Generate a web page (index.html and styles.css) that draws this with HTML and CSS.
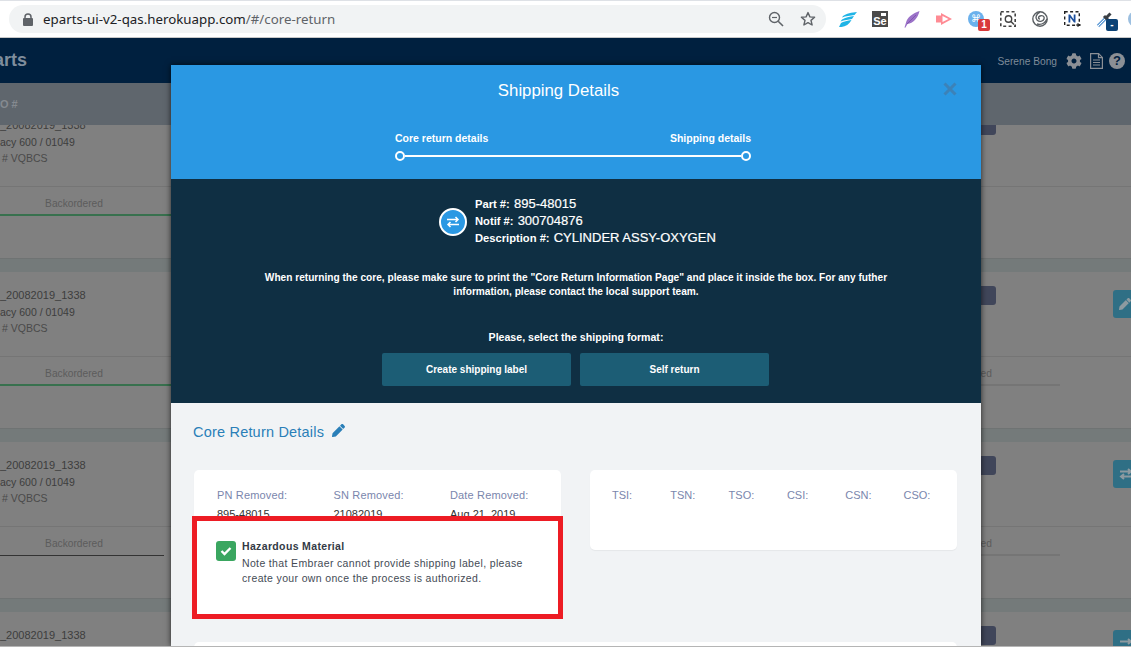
FILE: index.html
```html
<!DOCTYPE html>
<html lang="en">
<head>
<meta charset="utf-8">
<title>eParts - core return</title>
<link rel="stylesheet" href="styles.css">
</head>
<body>
<div class="window">
  <div class="toolbar">
    <div class="omnibox">
      <svg class="lock" width="10" height="13" viewBox="0 0 10 13"><path d="M2 6V4a3 3 0 0 1 6 0v2" fill="none" stroke="#5f6368" stroke-width="1.5"/><rect y="5" width="10" height="8" rx="1" fill="#5f6368"/></svg>
      <span class="url">eparts-ui-v2-qas.herokuapp.com<span class="url-path">/#/core-return</span></span>
      <svg class="omni-icon" width="16" height="16" viewBox="0 0 16 16"><circle cx="6.500" cy="6.500" r="5" fill="none" stroke="#5f6368" stroke-width="1.400"/><path d="M10.200 10.200L15 15" stroke="#5f6368" stroke-width="1.600"/><path d="M4 6.500h5" stroke="#5f6368" stroke-width="1.200"/></svg>
      <svg class="omni-icon" width="16" height="16" viewBox="0 0 16 16"><path d="M8 1.600l1.900 4.300 4.700.4-3.600 3.100 1.100 4.600L8 11.600l-4.100 2.400L5 9.400 1.400 6.300l4.700-.4z" fill="none" stroke="#5f6368" stroke-width="1.400" stroke-linejoin="round"/></svg>
    </div>
    <div class="extensions">
      <div class="ext"><svg width="18" height="15" viewBox="0 0 18 15"><path d="M18 0C13 .5 7 1.500 4 4L3 5.500C7 4 11 3.500 15.500 3zM15 4C11 4.500 6 5.500 3 7.500L1.500 9.500C5.500 8 9.500 7.500 13 7zM12.500 8C9 8.500 4 9.500 2 11L0 15c5 .5 10-2 12.500-7z" fill="#1fb4e6"/></svg></div>
      <div class="ext"><span class="ext-se"><span class="ext-cam"></span>Se</span></div>
      <div class="ext"><svg width="16" height="17" viewBox="0 0 16 17"><path d="M15.500 0C11 1.500 4.500 5 2.500 10L.5 16.500l.8.3L3.500 13C9 12.500 14 7 15.500 0z" fill="#9b72c8"/><path d="M12 4L3 13" stroke="#7a4fa8" stroke-width=".8"/></svg></div>
      <div class="ext"><svg width="16" height="12" viewBox="0 0 16 12"><path d="M0 2.500h5V0l11 6-11 6V9.500H0z" fill="#ff8b94"/><path d="M6.500 3l6 3-6 3z" fill="#fff"/></svg></div>
      <div class="ext ext-badged">
        <span class="ext-cmd">⌘</span>
        <span class="badge badge-red">1</span>
      </div>
      <div class="ext"><svg width="16" height="16" viewBox="0 0 16 16"><rect x=".8" y=".8" width="14.400" height="14.400" fill="none" stroke="#444" stroke-width="1.600" stroke-dasharray="3 2.400"/><circle cx="8.500" cy="8" r="3.200" fill="none" stroke="#444" stroke-width="1.400"/><path d="M11 10.500l3 3" stroke="#444" stroke-width="1.500"/></svg></div>
      <div class="ext"><svg width="16" height="16" viewBox="0 0 16 16" fill="none" stroke="#5a5f63" stroke-width="1.400"><circle cx="8" cy="8" r="7.200"/><path d="M8 1C4 3 3 7 5 9s6 2 7-1-2-4-4-3-2 3 0 3"/><path d="M15 8c-2 4-6 6-10 5"/></svg></div>
      <div class="ext"><svg width="17" height="16" viewBox="0 0 17 16"><rect x=".7" y=".7" width="14.600" height="13.600" fill="none" stroke="#222" stroke-width="1.400" stroke-dasharray="3 2.400"/><path d="M4.500 11.500v-8h1.600l3.600 5v-5h1.800v8H10L6.300 6.400v5.100z" fill="#1c4f9c"/><path d="M14 12v4M12 14h5" stroke="#222"/></svg></div>
      <div class="ext ext-badged">
        <svg width="17" height="17" viewBox="0 0 17 17"><path d="M2 15L10 7" stroke="#6aa2d8" stroke-width="3.400"/><path d="M2 15L10 7" stroke="#fff" stroke-width="1"/><path d="M8 5l4 4M11 6l3.500-3.500" stroke="#3a3f44" stroke-width="3"/></svg>
        <span class="badge badge-blue">-</span>
      </div>
      <div class="ext"><svg width="16" height="16" viewBox="0 0 16 16"><circle cx="8" cy="8" r="8" fill="#9cbfe0"/></svg></div>
    </div>
  </div>

  <div class="app-header">
    <span class="app-name">arts</span>
    <span class="user-name">Serene Bong</span>
    <svg class="head-icon" width="16" height="16" viewBox="0 0 512 512"><path fill="#8b8f95" d="M487.400 315.700l-42.600-24.600c4.300-23.200 4.300-47 0-70.200l42.600-24.600c4.900-2.800 7.100-8.600 5.500-14-11.100-35.600-30-67.800-54.700-94.600-3.800-4.100-10-5.100-14.800-2.300L380.800 110c-17.900-15.400-38.500-27.300-60.800-35.100V25.800c0-5.600-3.900-10.500-9.400-11.700-36.700-8.200-74.300-7.800-109.200 0-5.500 1.200-9.400 6.100-9.400 11.700V75c-22.200 7.900-42.800 19.800-60.800 35.100L88.700 85.500c-4.900-2.800-11-1.900-14.800 2.300-24.700 26.700-43.600 58.900-54.700 94.600-1.700 5.400.6 11.200 5.500 14L67.300 221c-4.300 23.200-4.300 47 0 70.200l-42.600 24.600c-4.900 2.800-7.100 8.600-5.500 14 11.100 35.600 30 67.800 54.700 94.600 3.800 4.100 10 5.100 14.800 2.300l42.600-24.600c17.900 15.400 38.500 27.300 60.800 35.100v49.200c0 5.600 3.900 10.500 9.400 11.700 36.700 8.200 74.300 7.800 109.200 0 5.500-1.200 9.400-6.100 9.400-11.700v-49.200c22.200-7.900 42.800-19.800 60.800-35.100l42.600 24.600c4.900 2.800 11 1.900 14.800-2.300 24.700-26.700 43.600-58.900 54.700-94.600 1.500-5.500-.7-11.300-5.600-14.100zM256 336c-44.100 0-80-35.900-80-80s35.900-80 80-80 80 35.900 80 80-35.900 80-80 80z"/></svg>
    <svg class="head-icon doc-icon" width="13" height="16" viewBox="0 0 13 16" fill="none" stroke="#8b8f95" stroke-width="1.200"><path d="M.6.6h8l3.800 3.800v11H.6z"/><path d="M3 7h7M3 9.500h7M3 12h7M8.500.6v4h4"/></svg>
    <span class="help-icon">?</span>
  </div>

  <div class="table-head">O #</div>

  <div class="rows">
    <div class="row">
      <div class="row-band"></div>
      <div class="row-top">
        <div class="row-text"><div class="row-id">_20082019_1338</div><div>acy 600 / 01049</div><div class="row-ref"># VQBCS</div></div>
        <div class="row-pill"></div>
      </div>
      <div class="row-status"><div class="status-left line-green">Backordered</div></div>
    </div>
    <div class="row">
      <div class="row-band"></div>
      <div class="row-top">
        <div class="row-text"><div class="row-id">_20082019_1338</div><div>acy 600 / 01049</div><div class="row-ref"># VQBCS</div></div>
        <div class="row-pill"></div>
        <div class="row-action"><svg width="12" height="12" viewBox="0 0 512 512"><path fill="#8d9aa0" d="M497.900 142.100l-46.100 46.100c-4.700 4.700-12.300 4.700-17 0l-111-111c-4.700-4.700-4.700-12.300 0-17l46.100-46.100c18.700-18.700 49.100-18.700 67.900 0l60.100 60.100c18.800 18.700 18.800 49.100 0 67.900zM284.200 99.800L21.600 362.400.4 483.900c-2.900 16.400 11.400 30.600 27.800 27.800l121.500-21.300 262.600-262.600c4.700-4.700 4.700-12.300 0-17l-111-111c-4.800-4.700-12.400-4.700-17.100 0z"/></svg></div>
      </div>
      <div class="row-status"><div class="status-left line-green">Backordered</div><div class="status-right">Backordered</div></div>
    </div>
    <div class="row">
      <div class="row-band"></div>
      <div class="row-top">
        <div class="row-text"><div class="row-id">_20082019_1338</div><div>acy 600 / 01049</div><div class="row-ref"># VQBCS</div></div>
        <div class="row-pill"></div>
        <div class="row-action"><svg width="14" height="12" viewBox="0 0 14 12" fill="none" stroke="#8d9aa0" stroke-width="2"><path d="M1 3.500h11M9 1l3 2.500L9 6M13 8.500H2M5 6L2 8.500 5 11"/></svg></div>
      </div>
      <div class="row-status"><div class="status-left line-dark">Backordered</div><div class="status-right">Backordered</div></div>
    </div>
    <div class="row">
      <div class="row-band"></div>
      <div class="row-top">
        <div class="row-text"><div class="row-id">_20082019_1338</div></div>
        <div class="row-pill"></div>
        <div class="row-action"><svg width="14" height="12" viewBox="0 0 14 12" fill="none" stroke="#8d9aa0" stroke-width="2"><path d="M1 3.500h11M9 1l3 2.500L9 6"/></svg></div>
      </div>
    </div>
  </div>

  <div class="modal">
    <div class="modal-head">
      <h2 class="modal-title">Shipping Details</h2>
      <svg class="modal-close" width="14" height="14" viewBox="0 0 14 14"><path d="M1.500 1.500l11 11M12.500 1.500l-11 11" stroke="#3c82b8" stroke-width="3"/></svg>
      <div class="stepper">
        <div class="step-labels"><span>Core return details</span><span>Shipping details</span></div>
        <div class="step-track"><span class="step-dot"></span><span class="step-line"></span><span class="step-dot"></span></div>
      </div>
    </div>

    <div class="modal-info">
      <div class="part">
        <span class="part-icon"><svg width="14" height="12" viewBox="0 0 14 12" fill="none" stroke="#fff" stroke-width="1.500"><path d="M1 3.500h11M9.500 1L12 3.500 9.500 6M13 8.500H2M4.500 6L2 8.500 4.500 11"/></svg></span>
        <div class="part-lines">
          <div class="part-line">Part #: <span class="part-value">895-48015</span></div>
          <div class="part-line">Notif #: <span class="part-value">300704876</span></div>
          <div class="part-line">Description #: <span class="part-value">CYLINDER ASSY-OXYGEN</span></div>
        </div>
      </div>
      <p class="info-note">When returning the core, please make sure to print the "Core Return Information Page" and place it inside the box. For any futher information, please contact the local support team.</p>
      <p class="info-select">Please, select the shipping format:</p>
      <div class="ship-buttons">
        <button class="ship-btn">Create shipping label</button>
        <button class="ship-btn">Self return</button>
      </div>
    </div>

    <div class="modal-body">
      <div class="section-title">Core Return Details
        <svg width="13" height="13" viewBox="0 0 512 512"><path fill="#2a7fb8" d="M497.900 142.100l-46.100 46.100c-4.700 4.700-12.300 4.700-17 0l-111-111c-4.700-4.700-4.700-12.300 0-17l46.100-46.100c18.700-18.700 49.100-18.700 67.900 0l60.100 60.100c18.800 18.700 18.800 49.100 0 67.900zM284.200 99.800L21.600 362.400.4 483.900c-2.900 16.400 11.400 30.600 27.800 27.800l121.500-21.300 262.600-262.600c4.700-4.700 4.700-12.300 0-17l-111-111c-4.800-4.700-12.400-4.700-17.100 0z"/></svg>
      </div>
      <div class="cards">
        <div class="card card-removed">
          <div><div class="field-label">PN Removed:</div><div class="field-value">895-48015</div></div>
          <div><div class="field-label">SN Removed:</div><div class="field-value">21082019</div></div>
          <div><div class="field-label">Date Removed:</div><div class="field-value">Aug 21, 2019</div></div>
        </div>
        <div class="card card-times">
          <div class="field-label">TSI:</div>
          <div class="field-label">TSN:</div>
          <div class="field-label">TSO:</div>
          <div class="field-label">CSI:</div>
          <div class="field-label">CSN:</div>
          <div class="field-label">CSO:</div>
        </div>
      </div>
      <div class="card card-next"></div>
    </div>
  </div>

  <div class="callout">
    <span class="check"><svg width="12" height="10" viewBox="0 0 12 10"><path d="M1.500 5l3 3 6-6" fill="none" stroke="#fff" stroke-width="2.400"/></svg></span>
    <div>
      <div class="callout-title">Hazardous Material</div>
      <div class="callout-text">Note that Embraer cannot provide shipping label, please create your own once the process is authorized.</div>
    </div>
  </div>
</div>
</body>
</html>
```

FILE: styles.css
```css
html, body { margin: 0; padding: 0; background: #fff; overflow: hidden; }
body { font-family: "Liberation Sans", Arial, sans-serif; }

.window {
	position: relative;
	height: 646px;
	display: flex;
	flex-direction: column;
	overflow: hidden;
	border-bottom: 1px solid #b5b5b5;
}

/* browser bar */
.toolbar {
	flex: none;
	height: 36px;
	display: flex;
	align-items: center;
	background: #fff;
	border-top: 1px solid #dee1e6;
	border-bottom: 1px solid #c8c8c8;
	overflow: hidden;
}
.omnibox {
	flex: none;
	width: 817px;
	height: 28px;
	margin: 0 6px 0 9px;
	box-sizing: border-box;
	padding: 0 10px 0 14px;
	display: flex;
	align-items: center;
	background: #f1f3f4;
	border-radius: 14px;
}
.lock { flex: none; margin-right: 10px; }
.url {
	flex: 1;
	font-family: "Noto Sans", sans-serif;
	font-size: 13.300px;
	color: #202124;
	white-space: nowrap;
}
.url-path { color: #5f6368; }
.omni-icon { flex: none; margin-left: 16px; }
.extensions { display: flex; flex: none; }
.ext {
	position: relative;
	flex: none;
	width: 32px;
	height: 24px;
	display: flex;
	align-items: center;
	justify-content: center;
}
.ext-se {
	position: relative;
	width: 16px;
	height: 16px;
	background: #4a4a4a;
	color: #fff;
	font-size: 11px;
	font-weight: bold;
	line-height: 21px;
	text-align: center;
}
.ext-cam {
	position: absolute;
	right: 2px;
	top: 2px;
	width: 5px;
	height: 3px;
	background: #fff;
}
.ext-cmd {
	width: 16px;
	height: 16px;
	border-radius: 50%;
	background: #6bb1ec;
	color: #fff;
	font-family: "DejaVu Sans", sans-serif;
	font-size: 10px;
	line-height: 16px;
	text-align: center;
}
.badge {
	position: absolute;
	left: 18px;
	top: 12px;
	width: 12px;
	height: 12px;
	border-radius: 2px;
	color: #fff;
	font-size: 10px;
	font-weight: bold;
	line-height: 12px;
	text-align: center;
}
.badge-red { background: #d93a3a; }
.badge-blue { background: #0c4275; }

/* app behind the dialog */
.app-header {
	flex: none;
	height: 45px;
	display: flex;
	align-items: center;
	background: #00203f;
	padding-right: 6px;
}
.app-name {
	margin: 0 auto 0 -6px;
	font-size: 18px;
	font-weight: bold;
	color: #7f8d9c;
}
.user-name { margin: 1px 9px 0 0; font-size: 10.200px; color: #7f8b99; }
.head-icon { flex: none; margin-right: 8px; }
.doc-icon { margin-right: 6px; }
.help-icon {
	width: 16px;
	height: 16px;
	border-radius: 50%;
	background: #8b8f95;
	color: #00203f;
	font-size: 13px;
	font-weight: bold;
	line-height: 16px;
	text-align: center;
}
.table-head {
	flex: none;
	height: 42px;
	line-height: 42px;
	background: #5f666d;
	color: #858a90;
	font-size: 11px;
	font-weight: bold;
}
.rows { flex: 1; overflow: hidden; background: #808080; }
.row { height: 170px; color: #3d3d3d; font-size: 10.500px; }
.row:first-child { margin-top: -37px; }
.row-band {
	height: 13px;
	background: #747a7a;
	border-top: 1px solid #6f7373;
}
.row-top {
	height: 84px;
	display: grid;
	grid-template-columns: 960px 36px 117px 30px;
	align-items: start;
	border-bottom: 1px solid #757575;
}
.row-text { padding-top: 15px; line-height: 16.500px; white-space: nowrap; }
.row-id { font-size: 11px; }
.row-ref { padding-left: 2px; color: #4a4a4a; font-size: 10.500px; }
.row-pill {
	height: 19px;
	margin-top: 14px;
	background: #40465a;
	border-radius: 3px;
}
.row-action {
	grid-column: 4;
	height: 28px;
	margin-top: 18px;
	display: flex;
	align-items: center;
	padding-left: 6px;
	background: #2f6f85;
	border-radius: 3px;
}
.row-status { display: flex; color: #5c5c5c; font-size: 10.200px; }
.status-left, .status-right {
	height: 27px;
	line-height: 33px;
	text-align: center;
}
.status-left { width: 148px; padding-right: 27px; }
.status-right { width: 194px; margin-left: 691px; border-bottom: 2px solid #757575; }
.line-green { border-bottom: 2px solid #38714e; }
.line-dark { height: 28px; padding-right: 16px; border-bottom: 1px solid #333; }
.line-dark + .status-right { margin-left: 702px; }

/* dialog */
.modal {
	position: absolute;
	left: 171px;
	top: 65px;
	width: 810px;
	bottom: 0;
	overflow: hidden;
	background: #f1f3f5;
	box-shadow: 0 0 6px rgba(0, 0, 0, .7);
	display: flex;
	flex-direction: column;
}
.modal-head {
	position: relative;
	flex: none;
	height: 114px;
	background: #2a98e3;
	color: #fff;
}
.modal-title {
	margin: 0;
	padding: 16px 35px 0 0;
	font-size: 16.800px;
	font-weight: normal;
	line-height: 20px;
	text-align: center;
}
.modal-close { position: absolute; left: 772px; top: 17px; }
.stepper { width: 356px; margin: 30px 0 0 224px; }
.step-labels {
	display: flex;
	justify-content: space-between;
	font-size: 10.500px;
	font-weight: bold;
	line-height: 14px;
}
.step-track { display: flex; align-items: center; margin-top: 6px; }
.step-dot {
	flex: none;
	width: 10px;
	height: 10px;
	box-sizing: border-box;
	border: 2px solid #fff;
	border-radius: 50%;
}
.step-line { flex: 1; height: 2px; background: #fff; }

.modal-info {
	flex: none;
	height: 224px;
	box-sizing: border-box;
	padding-top: 17px;
	background: #0f2f43;
	color: #fff;
	text-align: center;
}
.part {
	display: flex;
	align-items: center;
	margin-left: 268px;
	text-align: left;
	font-size: 11.200px;
	font-weight: bold;
}
.part-line { height: 17px; line-height: 17px; }
.part-icon {
	flex: none;
	width: 28px;
	height: 28px;
	box-sizing: border-box;
	margin-right: 8px;
	display: flex;
	align-items: center;
	justify-content: center;
	background: #2a98e3;
	border: 2px solid #fff;
	border-radius: 50%;
}
.part-value { margin-left: 1px; font-size: 13px; font-weight: normal; line-height: 1; -webkit-text-stroke: .2px #fff; }
.info-note {
	margin: 24px auto 0;
	width: 640px;
	font-size: 10.130px;
	font-weight: bold;
	line-height: 14px;
}
.info-select { margin: 31px 0 0; font-size: 10.600px; font-weight: bold; line-height: 14px; }
.ship-buttons { display: flex; justify-content: center; gap: 9px; margin: 9px 1px 0 0; }
.ship-btn {
	width: 189px;
	height: 33px;
	padding: 0 0 1px;
	border: 0;
	border-radius: 2px;
	background: #1c5d75;
	color: #fff;
	font-family: inherit;
	font-size: 10px;
	font-weight: bold;
}

.modal-body { flex: 1; padding: 0 24px 0 23px; }
.section-title {
	height: 16px;
	margin: 21px 0 0 -1px;
	font-size: 14.500px;
	line-height: 16px;
	color: #2a7fb8;
	letter-spacing: .2px;
}
.section-title svg { margin-left: 4px; }
.cards { display: flex; gap: 29px; margin-top: 30px; }
.card {
	background: #fff;
	border-radius: 5px;
	box-shadow: 0 1px 1px rgba(0, 0, 0, .05);
}
.card-removed, .card-times {
	flex: none;
	width: 367px;
	height: 80px;
	box-sizing: border-box;
	padding: 18px 0 0 23px;
	display: grid;
}
.card-removed { grid-template-columns: repeat(3, 116.500px); }
.card-times { grid-template-columns: repeat(6, 58.300px); padding-left: 22px; }
.field-label {
	font-size: 11px;
	line-height: 14px;
	color: #7a86ad;
	letter-spacing: .15px;
}
.card-times .field-label { letter-spacing: 0; }
.field-value { margin-top: 5px; font-size: 11px; line-height: 14px; color: #333; }
.card-next { height: 20px; margin-top: 92px; }

/* red annotation drawn over the screenshot */
.callout {
	position: absolute;
	left: 192px;
	top: 516px;
	width: 371px;
	height: 103px;
	box-sizing: border-box;
	padding: 18px 30px 0 19px;
	display: flex;
	background: #fff;
	border: 5px solid #ed1c24;
}
.check {
	flex: none;
	width: 20px;
	height: 20px;
	margin: 2px 6px 0 0;
	display: flex;
	align-items: center;
	justify-content: center;
	background: #3aa660;
	border-radius: 3px;
}
.callout-title {
	font-size: 10.500px;
	font-weight: bold;
	line-height: 14px;
	color: #333a45;
	letter-spacing: .35px;
}
.callout-text {
	margin-top: 3px;
	font-size: 10.500px;
	line-height: 15px;
	color: #444b55;
	letter-spacing: .35px;
}
```
